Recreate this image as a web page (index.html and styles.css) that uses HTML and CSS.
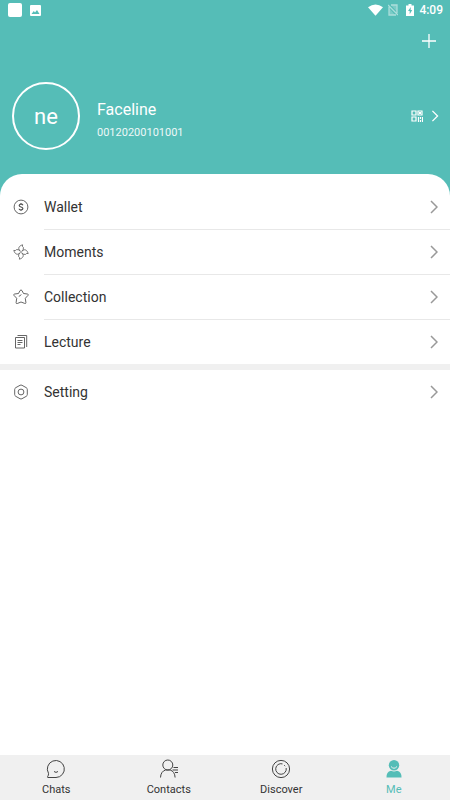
FILE: index.html
```html
<!DOCTYPE html>
<html lang="en">
<head>
<meta charset="utf-8">
<meta name="viewport" content="width=device-width, initial-scale=1">
<title>Me</title>
<link rel="stylesheet" href="styles.css">
</head>
<body>
<svg class="defs" aria-hidden="true">
  <symbol id="chevron" viewBox="0 0 8 14"><path d="M1 1l6 6-6 6"/></symbol>
</svg>
<header class="header">
  <div class="status">
    <svg class="status-left" viewBox="0 0 34 14" width="34" height="14" fill="#fff">
      <rect width="14" height="14" rx="2"/>
      <path fill-rule="evenodd" d="M23 2h9q1 0 1 1v9q0 1-1 1h-9q-1 0-1-1V3q0-1 1-1zM23.500 11h8l-2.500-4-2 2.500-1.200-1.500z"/>
    </svg>
    <svg viewBox="0 0 16 12" width="15" height="12" fill="#fff"><path d="M0 3Q8-2.500 16 3L8 12z"/></svg>
    <svg class="sim" viewBox="0 0 10 12" width="10" height="12"><path d="M3 1h6v8M1 3v8h7M0 1l10 10" fill="none" stroke="#fff" stroke-width="1.300"/><path d="M3 1h6v7zM1 4l6 7H1z" fill="#fff" opacity=".45"/></svg>
    <svg class="battery" viewBox="0 0 8 12" width="8" height="12"><path d="M2.500 0h3v1.500H8V12H0V1.500h2.500z" fill="#fff"/><path d="M4.800 3L2 7h1.700v3.200L6.200 6H4.600z" fill="#55bdb7"/></svg>
    <time class="clock">4:09</time>
  </div>
  <div class="toolbar">
    <button class="add" aria-label="Add"><svg viewBox="0 0 14 14" width="14" height="14"><path d="M7 0v14M0 7h14" stroke="#fff" stroke-width="1.300"/></svg></button>
  </div>
  <a class="profile" href="#profile">
    <span class="avatar">ne</span>
    <span class="identity"><span class="name">Faceline</span><span class="number">00120200101001</span></span>
    <svg viewBox="0 0 12 12" width="12" height="12" fill="none" stroke="#fff" stroke-width="1.200"><path d="M1 1h4v4H1zM7 1h4v4H7zM1 7h4v4H1z"/><path d="M7.500 7v5M9.500 7v2M9.500 10v2M11.500 7v5M8 2.500h2M8 3.500h2"/></svg>
    <svg class="chevron chevron-light"><use href="#chevron"/></svg>
  </a>
</header>
<main class="panel">
  <ul class="menu">
    <li><a class="row" href="#wallet">
      <svg class="icon" viewBox="0 0 16 16"><circle cx="8" cy="8" r="6.900"/><path class="bold" d="M9.900 6.200Q9.500 5.100 8 5.100T6.200 6.500Q6.200 7.600 8 8t1.900 1.500Q9.900 10.900 8 10.900T6.100 9.700M8 4v1M8 11v1"/></svg>
      <span class="label">Wallet</span><svg class="chevron"><use href="#chevron"/></svg></a></li>
    <li><a class="row" href="#moments">
      <svg class="icon icon-fine" viewBox="0 0 16 16"><g id="blade"><path d="M7.500 7C4.500 5 5.500 2 9.600.8Q8.800 2.500 10.400 3.500 11 6 8.500 7.300"/></g><use href="#blade" transform="rotate(90 8 8)"/><use href="#blade" transform="rotate(180 8 8)"/><use href="#blade" transform="rotate(270 8 8)"/></svg>
      <span class="label">Moments</span><svg class="chevron"><use href="#chevron"/></svg></a></li>
    <li><a class="row" href="#collection">
      <svg class="icon" viewBox="0 0 16 16"><path d="M7 1.600Q8 .2 9 1.600l1.500 2.900 3.900.5q1.400.3.600 1.400l-2.700 2.900.6 4.300q0 1.300-1.200.8L8 13l-3.700 1.500q-1.200.4-1.200-.8l.6-4.400L1 6.400Q.2 5.300 1.600 5l3.900-.5zM5.800 7.300Q7.600 7 8.200 5.400"/></svg>
      <span class="label">Collection</span><svg class="chevron"><use href="#chevron"/></svg></a></li>
    <li><a class="row" href="#lecture">
      <svg class="icon" viewBox="0 0 16 16"><path d="M2.500 3.500h9v10.500h-9zM4.500 1.500h9.200V13M4.500 6.500h5M4.500 8.500h5M4.500 10.500h3"/></svg>
      <span class="label">Lecture</span><svg class="chevron"><use href="#chevron"/></svg></a></li>
  </ul>
  <ul class="menu menu-next">
    <li><a class="row" href="#setting">
      <svg class="icon" viewBox="0 0 16 16"><path d="M7 1.300q1-.6 2 0l4.300 2.400q1 .6 1 1.700v5.200q0 1.100-1 1.700L9 14.700q-1 .6-2 0l-4.300-2.400q-1-.6-1-1.700V5.400q0-1.100 1-1.700z"/><circle cx="8" cy="8" r="2.900"/></svg>
      <span class="label">Setting</span><svg class="chevron"><use href="#chevron"/></svg></a></li>
  </ul>
</main>
<nav class="tabs">
  <a class="tab" href="#chats"><svg class="tab-icon" viewBox="0 0 20 20"><path d="M2.500 14.300A8.500 8.500 0 1 1 10 18.500H2q-.8 0-.4-.8 1.100-1.500.9-3.400M8 12.500q2 1.800 4 0"/></svg>Chats</a>
  <a class="tab" href="#contacts"><svg class="tab-icon" viewBox="0 0 20 20"><circle cx="8.800" cy="6" r="5"/><path d="M1.500 18.500Q1.800 12.500 6.500 11h4.700q4.600 1.500 4.900 7.500M14.500 8.500h4.500M13.500 11h5.500M16 13.500h3"/></svg>Contacts</a>
  <a class="tab" href="#discover"><svg class="tab-icon" viewBox="0 0 20 20"><circle cx="10" cy="10" r="8.600"/><path d="M11.500 4.900A5.300 5.300 0 1 0 15.200 9M13.200 6.200l1 1"/></svg>Discover</a>
  <a class="tab tab-active" href="#me" aria-current="page"><svg class="tab-icon" viewBox="0 0 20 20"><circle cx="10" cy="6.200" r="5.200"/><path d="M2.500 18.500Q2.200 13 7 11.800q3 1.200 6 0 4.800 1.200 4.500 6.700z"/><path class="smile" d="M7 7.500q3 3.500 6 0"/></svg>Me</a>
</nav>
</body>
</html>
```
FILE: styles.css
```css
* { box-sizing: border-box; }
body {
  margin: 0;
  min-height: 100vh;
  display: flex;
  flex-direction: column;
  background: #fff;
  color: #333;
  font-family: Roboto, "Liberation Sans", sans-serif;
}
svg { flex: none; }
a { color: inherit; text-decoration: none; }
.defs { position: absolute; width: 0; height: 0; }
.header {
  background: #55bdb7;
  color: #fff;
  padding-bottom: 48px;
}
.status {
  display: flex;
  align-items: center;
  height: 20px;
  padding: 0 7px 0 8px;
}
.status-left { margin-right: auto; }
.sim { margin-left: 5px; opacity: .5; }
.battery { margin-left: 8px; }
.clock {
  margin-left: 5px;
  font-size: 12px;
  font-weight: 500;
  line-height: 20px;
}
.toolbar {
  display: flex;
  justify-content: flex-end;
  height: 42px;
  padding-right: 8px;
}
.add {
  display: flex;
  align-items: center;
  justify-content: center;
  width: 26px;
  height: 42px;
  padding: 0;
  border: 0;
  background: none;
}
.profile {
  display: flex;
  align-items: center;
  margin-top: 20px;
  padding: 0 11px 0 12px;
}
.avatar {
  width: 68px;
  height: 68px;
  border: 2px solid #fff;
  border-radius: 50%;
  font-size: 22px;
  line-height: 66px;
  text-align: center;
}
.identity {
  display: flex;
  flex-direction: column;
  flex: 1;
  margin-left: 17px;
  padding-top: 10px;
}
.name { font-size: 16px; line-height: 24px; }
.number { font-size: 11px; line-height: 22px; opacity: .9; }
.chevron {
  width: 8px;
  height: 14px;
  fill: none;
  stroke: #999;
  stroke-width: 1.5;
}
.chevron-light {
  height: 12px;
  margin-left: 8px;
  stroke: #fff;
}
.panel {
  flex: 1;
  margin-top: -24px;
  padding-top: 11px;
  border-radius: 22px 22px 0 0;
  background: #fff;
}
.menu {
  margin: 0;
  padding: 0;
  list-style: none;
}
.menu-next { border-top: 6px solid #f0f0f0; }
.row {
  display: flex;
  align-items: center;
  padding-left: 13px;
}
.icon {
  width: 16px;
  height: 16px;
  margin-right: 15px;
  fill: none;
  stroke: #555;
  stroke-width: .9;
}
.icon .bold { stroke-width: 1.2; }
.icon-fine { stroke-width: .8; }
.label {
  flex: 1;
  font-size: 14px;
  line-height: 44px;
}
.row .chevron { margin-right: 12px; }
.menu li:not(:last-child) {
  background: linear-gradient(#e8e8e8, #e8e8e8) 44px 100% / 100% 1px no-repeat;
  padding-bottom: 1px;
}
.tabs {
  display: flex;
  height: 45px;
  background: #f0f0f0;
}
.tab {
  flex: 1;
  display: flex;
  flex-direction: column;
  align-items: center;
  padding-top: 4px;
  font-size: 11px;
  line-height: 22px;
}
.tab-icon {
  width: 20px;
  height: 20px;
  fill: none;
  stroke: #444;
}
.tab-active { color: #55bdb7; }
.tab-active .tab-icon { fill: #55bdb7; stroke: none; }
.tab-icon .smile { fill: none; stroke: #f0f0f0; }
```
